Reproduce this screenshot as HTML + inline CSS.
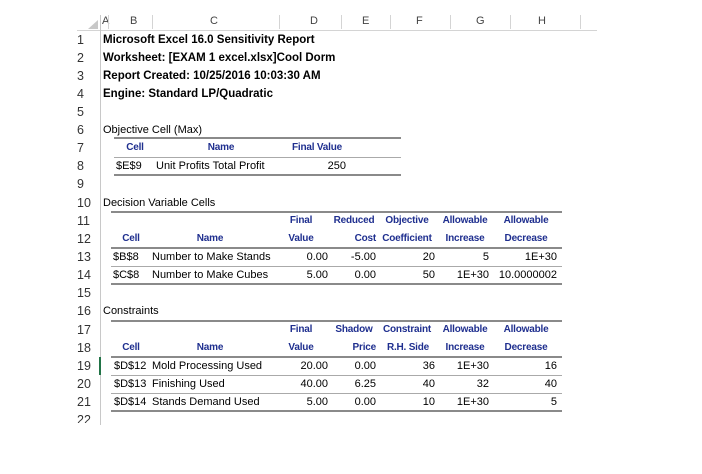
<!DOCTYPE html>
<html><head><style>
body{margin:0;width:702px;height:474px;background:#fff;position:relative;overflow:hidden;font-family:"Liberation Sans",Arial,sans-serif;font-size:11px;color:#000}
.a{position:absolute;white-space:nowrap;line-height:18px;height:18px}
.b{font-weight:bold;font-size:11.5px}
.h{font-weight:bold;color:#1f2f8f;font-size:10px;letter-spacing:-0.2px}
.r{text-align:right}
.c{text-align:center;width:70px}
.ln{position:absolute;height:1px;background:#aaa}
.lk{position:absolute;height:2px;background:#8a8a8a}
.rh{position:absolute;left:77px;width:22px;font-size:12.5px;color:#333;line-height:18px}
.ch{position:absolute;top:12px;line-height:18px;font-size:11px;color:#444}
.cs{position:absolute;top:15px;width:1px;height:14px;background:#d4d4d4}
</style></head><body>
<div style="position:absolute;left:77px;top:15px;width:520px;height:15px;background:#fff;border-bottom:1px solid #d4d4d4"></div>
<div style="position:absolute;left:88px;top:20px;width:0;height:0;border-left:10px solid transparent;border-bottom:9px solid #c8c8c8"></div>
<div style="position:absolute;left:100px;top:15px;width:1px;height:410px;background:#c8c8c8"></div>
<div style="position:absolute;left:99px;top:357px;width:2px;height:18px;background:#217346"></div>
<div class="ch" style="left:102px">A</div>
<div class="cs" style="left:108px"></div>
<div class="ch" style="left:130px">B</div>
<div class="cs" style="left:152px"></div>
<div class="ch" style="left:210px">C</div>
<div class="cs" style="left:279px"></div>
<div class="ch" style="left:310px">D</div>
<div class="cs" style="left:341px"></div>
<div class="ch" style="left:362px">E</div>
<div class="cs" style="left:390px"></div>
<div class="ch" style="left:416px">F</div>
<div class="cs" style="left:450px"></div>
<div class="ch" style="left:476px">G</div>
<div class="cs" style="left:510px"></div>
<div class="ch" style="left:538px">H</div>
<div class="cs" style="left:580px"></div>

<div class="rh" style="top:31px">1</div><div class="rh" style="top:49px">2</div><div class="rh" style="top:67px">3</div><div class="rh" style="top:85px">4</div><div class="rh" style="top:103px">5</div><div class="rh" style="top:121px">6</div><div class="rh" style="top:139px">7</div><div class="rh" style="top:157px">8</div><div class="rh" style="top:175px">9</div><div class="rh" style="top:194px">10</div><div class="rh" style="top:212px">11</div><div class="rh" style="top:230px">12</div><div class="rh" style="top:248px">13</div><div class="rh" style="top:266px">14</div><div class="rh" style="top:284px">15</div><div class="rh" style="top:302px">16</div><div class="rh" style="top:321px">17</div><div class="rh" style="top:339px">18</div><div class="rh" style="top:357px">19</div><div class="rh" style="top:375px">20</div><div class="rh" style="top:393px">21</div><div class="rh" style="top:411px;height:12px;overflow:hidden">22</div>

<div class="a b" style="left:103px;top:31px">Microsoft Excel 16.0 Sensitivity Report</div>
<div class="a b" style="left:103px;top:49px">Worksheet: [EXAM 1 excel.xlsx]Cool Dorm</div>
<div class="a b" style="left:103px;top:67px">Report Created: 10/25/2016 10:03:30 AM</div>
<div class="a b" style="left:103px;top:85px">Engine: Standard LP/Quadratic</div>
<div class="a" style="left:103px;top:121px">Objective Cell (Max)</div>
<div class="lk" style="left:114px;top:137px;width:287px"></div>
<div class="a h c" style="left:100px;top:139px">Cell</div>
<div class="a h c" style="left:186px;top:139px">Name</div>
<div class="a h c" style="left:282px;top:139px">Final Value</div>
<div class="ln" style="left:114px;top:157px;width:287px"></div>
<div class="a" style="left:116px;top:157px">$E$9</div>
<div class="a" style="left:156px;top:157px">Unit Profits Total Profit</div>
<div class="a r" style="left:300px;top:157px;width:46px">250</div>
<div class="lk" style="left:114px;top:174px;width:287px"></div>

<div class="a" style="left:103px;top:194px">Decision Variable Cells</div>
<div class="lk" style="left:111px;top:211px;width:451px"></div>
<div class="a h c" style="left:266px;top:212px">Final</div>
<div class="a h c" style="left:319px;top:212px">Reduced</div>
<div class="a h c" style="left:372px;top:212px">Objective</div>
<div class="a h c" style="left:430px;top:212px">Allowable</div>
<div class="a h c" style="left:491px;top:212px">Allowable</div>
<div class="a h c" style="left:96px;top:230px">Cell</div>
<div class="a h c" style="left:175px;top:230px">Name</div>
<div class="a h c" style="left:266px;top:230px">Value</div>
<div class="a h r" style="left:330px;top:230px;width:46px">Cost</div>
<div class="a h c" style="left:372px;top:230px">Coefficient</div>
<div class="a h c" style="left:430px;top:230px">Increase</div>
<div class="a h c" style="left:491px;top:230px">Decrease</div>
<div class="lk" style="left:111px;top:247px;width:451px"></div>
<div class="a" style="left:113px;top:248px">$B$8</div>
<div class="a" style="left:152px;top:248px;width:126px;overflow:hidden">Number to Make Stands</div>
<div class="a r" style="left:280px;top:248px;width:48px">0.00</div>
<div class="a r" style="left:330px;top:248px;width:46px">-5.00</div>
<div class="a r" style="left:390px;top:248px;width:45px">20</div>
<div class="a r" style="left:440px;top:248px;width:49px">5</div>
<div class="a r" style="left:500px;top:248px;width:57px">1E+30</div>
<div class="ln" style="left:111px;top:266px;width:451px"></div>
<div class="a" style="left:113px;top:266px">$C$8</div>
<div class="a" style="left:152px;top:266px">Number to Make Cubes</div>
<div class="a r" style="left:280px;top:266px;width:48px">5.00</div>
<div class="a r" style="left:330px;top:266px;width:46px">0.00</div>
<div class="a r" style="left:390px;top:266px;width:45px">50</div>
<div class="a r" style="left:440px;top:266px;width:49px">1E+30</div>
<div class="a r" style="left:490px;top:266px;width:67px">10.0000002</div>
<div class="lk" style="left:111px;top:283px;width:451px"></div>

<div class="a" style="left:103px;top:302px">Constraints</div>
<div class="lk" style="left:111px;top:320px;width:451px"></div>
<div class="a h c" style="left:266px;top:321px">Final</div>
<div class="a h c" style="left:319px;top:321px">Shadow</div>
<div class="a h c" style="left:372px;top:321px">Constraint</div>
<div class="a h c" style="left:430px;top:321px">Allowable</div>
<div class="a h c" style="left:491px;top:321px">Allowable</div>
<div class="a h c" style="left:96px;top:339px">Cell</div>
<div class="a h c" style="left:175px;top:339px">Name</div>
<div class="a h c" style="left:266px;top:339px">Value</div>
<div class="a h r" style="left:330px;top:339px;width:46px">Price</div>
<div class="a h c" style="left:373px;top:339px">R.H. Side</div>
<div class="a h c" style="left:430px;top:339px">Increase</div>
<div class="a h c" style="left:491px;top:339px">Decrease</div>
<div class="lk" style="left:111px;top:356px;width:451px"></div>
<div class="a" style="left:114px;top:357px">$D$12</div>
<div class="a" style="left:152px;top:357px">Mold Processing Used</div>
<div class="a r" style="left:280px;top:357px;width:48px">20.00</div>
<div class="a r" style="left:330px;top:357px;width:46px">0.00</div>
<div class="a r" style="left:390px;top:357px;width:45px">36</div>
<div class="a r" style="left:440px;top:357px;width:49px">1E+30</div>
<div class="a r" style="left:500px;top:357px;width:57px">16</div>
<div class="ln" style="left:111px;top:375px;width:451px"></div>
<div class="a" style="left:114px;top:375px">$D$13</div>
<div class="a" style="left:152px;top:375px">Finishing Used</div>
<div class="a r" style="left:280px;top:375px;width:48px">40.00</div>
<div class="a r" style="left:330px;top:375px;width:46px">6.25</div>
<div class="a r" style="left:390px;top:375px;width:45px">40</div>
<div class="a r" style="left:440px;top:375px;width:49px">32</div>
<div class="a r" style="left:500px;top:375px;width:57px">40</div>
<div class="ln" style="left:111px;top:393px;width:451px"></div>
<div class="a" style="left:114px;top:393px">$D$14</div>
<div class="a" style="left:152px;top:393px">Stands Demand Used</div>
<div class="a r" style="left:280px;top:393px;width:48px">5.00</div>
<div class="a r" style="left:330px;top:393px;width:46px">0.00</div>
<div class="a r" style="left:390px;top:393px;width:45px">10</div>
<div class="a r" style="left:440px;top:393px;width:49px">1E+30</div>
<div class="a r" style="left:500px;top:393px;width:57px">5</div>
<div class="lk" style="left:111px;top:410px;width:451px"></div>
</body></html>
